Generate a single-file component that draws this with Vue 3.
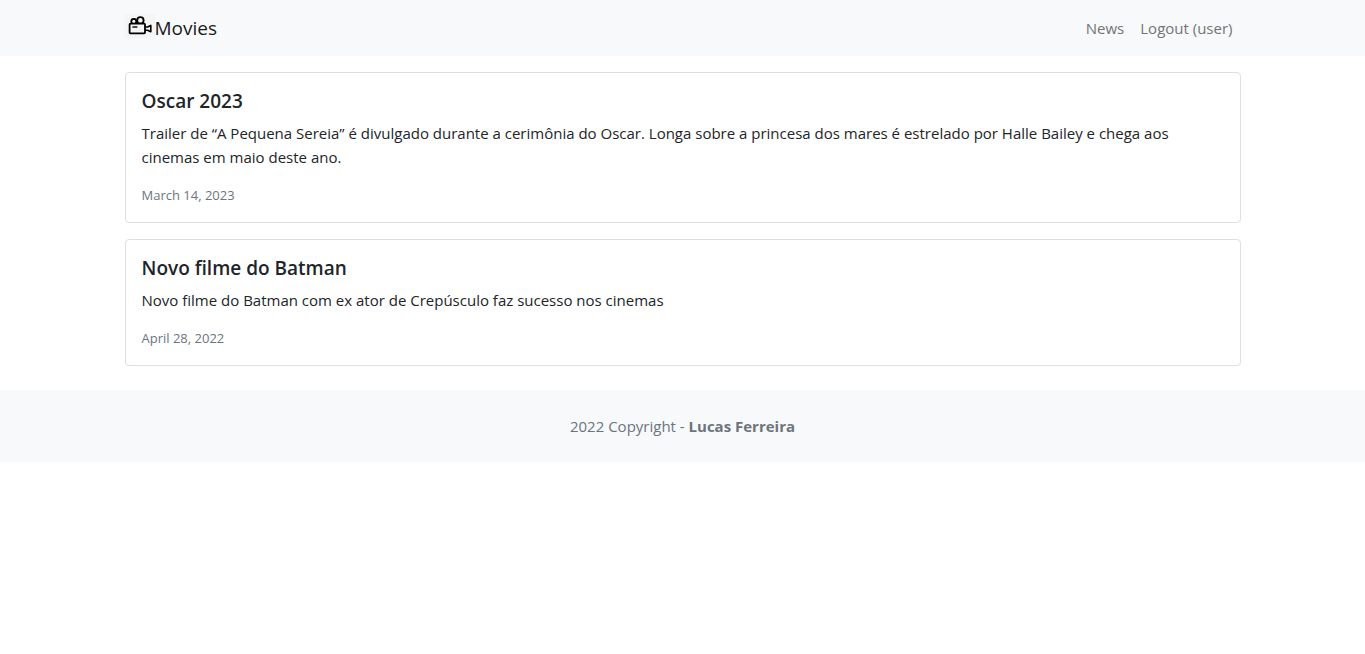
<script setup>
const posts = [
  {
    title: 'Oscar 2023',
    body: 'Trailer de “A Pequena Sereia” é divulgado durante a cerimônia do Oscar. Longa sobre a princesa dos mares é estrelado por Halle Bailey e chega aos cinemas em maio deste ano.',
    date: 'March 14, 2023',
  },
  {
    title: 'Novo filme do Batman',
    body: 'Novo filme do Batman com ex ator de Crepúsculo faz sucesso nos cinemas',
    date: 'April 28, 2022',
  },
]
</script>

<template>
  <div class="page">
    <header class="topbar">
      <nav class="container bar">
        <a class="brand" href="#">
          <svg class="logo" viewBox="0 0 30 24" aria-hidden="true">
            <rect width="30" height="24" fill="#f5f5f5" />
            <g fill="none" stroke="#000" stroke-width="1.8" stroke-linejoin="round">
              <circle cx="8.8" cy="7.4" r="2.5" />
              <circle cx="15.4" cy="6.4" r="3.2" />
              <rect x="4.6" y="9.6" width="15.4" height="9.8" rx="0.8" fill="#f5f5f5" />
              <path d="M20.4 13H22.6L25.8 11.4V17.8L22.6 16.2H20.4" stroke-width="1.6" />
              <path d="M7.4 13H12.4" stroke-width="1.4" />
            </g>
          </svg>
          <span>Movies</span>
        </a>
        <div class="links">
          <a href="#">News</a>
          <a href="#">Logout (user)</a>
        </div>
      </nav>
    </header>

    <main class="container list">
      <article v-for="post in posts" :key="post.title" class="card">
        <h5>{{ post.title }}</h5>
        <p class="body">{{ post.body }}</p>
        <p class="date">{{ post.date }}</p>
      </article>
    </main>

    <footer class="footer">2022 Copyright - <strong>Lucas Ferreira</strong></footer>
  </div>
</template>

<style>
body {
  margin: 0;
  background: #fff;
}
</style>

<style scoped>
.page {
  font-family: "Segoe UI", "Open Sans", "Noto Sans", sans-serif;
  font-size: 15px;
  line-height: 24px;
  color: #212529;
}
.container {
  box-sizing: border-box;
  max-width: 1140px;
  margin: 0 auto;
  padding: 0 12px;
}
.topbar,
.footer {
  background: #f8f9fa;
}
.bar {
  display: flex;
  align-items: center;
  justify-content: space-between;
  min-height: 56px;
}
.brand {
  display: flex;
  align-items: center;
  font-size: 19px;
  line-height: 30px;
  color: #1a1a1a;
  text-decoration: none;
}
.logo {
  width: 30px;
  height: 24px;
  margin-bottom: 4px;
}
.links {
  display: flex;
}
.links a {
  padding: 8px;
  color: #737474;
  text-decoration: none;
}
.list {
  display: flex;
  flex-direction: column;
  gap: 16px;
  padding-top: 16px;
  padding-bottom: 24px;
}
.card {
  padding: 16px;
  border: 1px solid #dfdfdf;
  border-radius: 4px;
}
.card h5 {
  margin: 0 0 8px;
  font-size: 19px;
  font-weight: 600;
  line-height: 24px;
}
.card p {
  margin: 0;
}
.card .date {
  margin-top: 16px;
  font-size: 13px;
  line-height: 21px;
  color: #6c757d;
}
.footer {
  padding: 24px;
  text-align: center;
  color: #6c757d;
}
</style>
